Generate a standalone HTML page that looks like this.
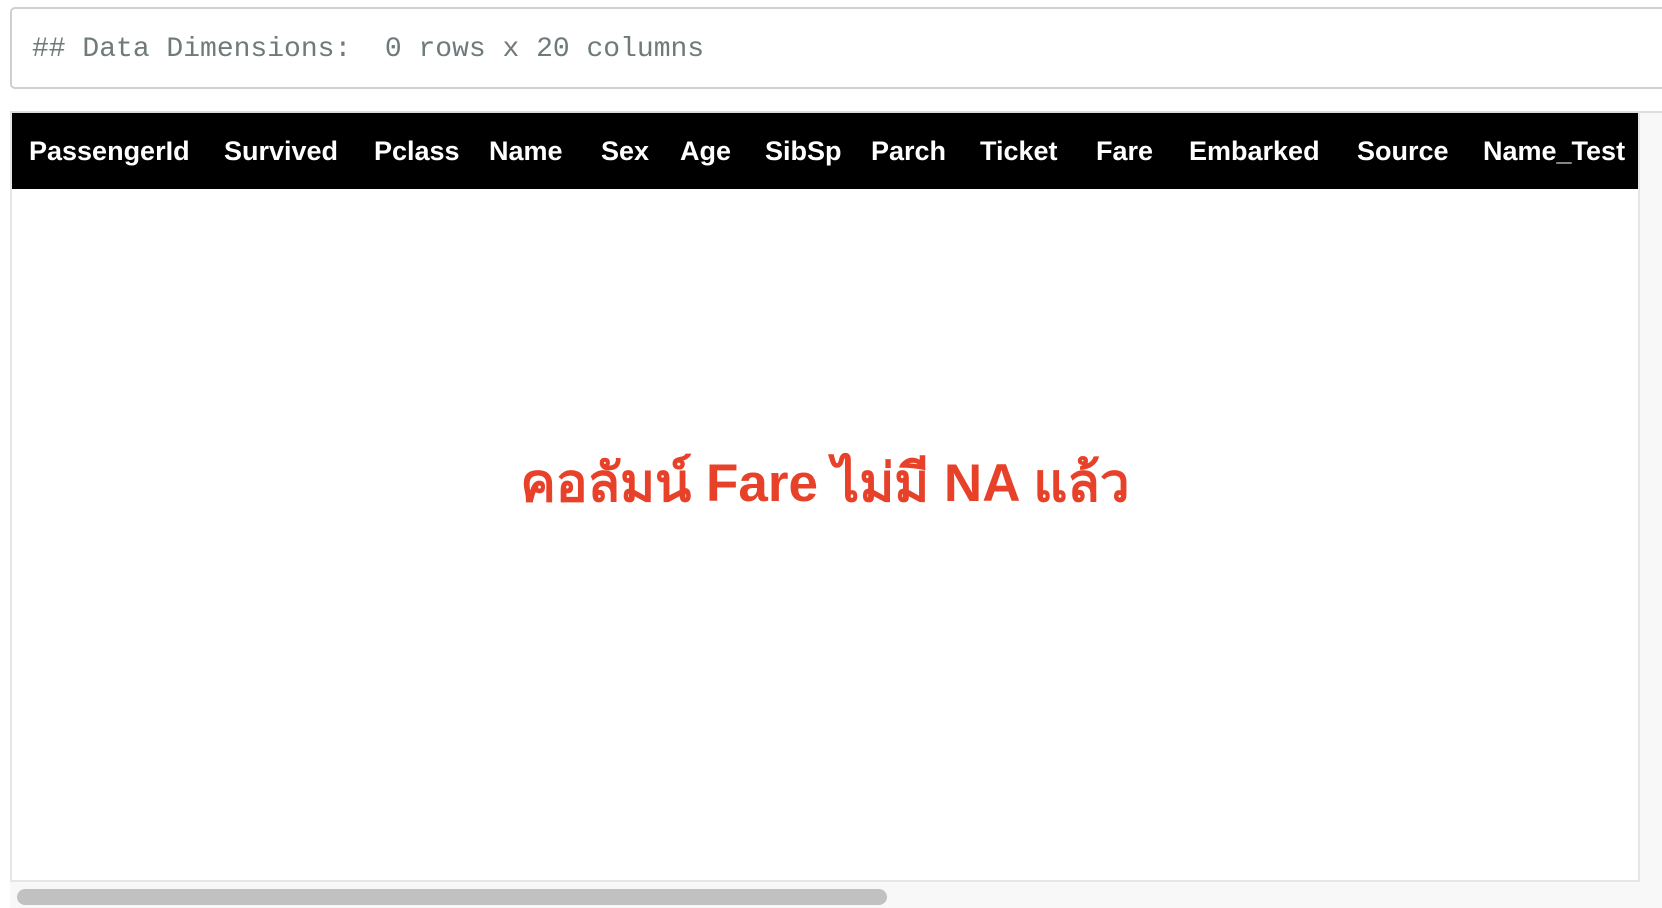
<!DOCTYPE html>
<html><head><meta charset="utf-8"><style>
html,body{margin:0;padding:0;width:1662px;height:906px;overflow:hidden;background:#fff;}
.pre{position:absolute;left:10px;top:7px;width:1680px;height:82px;border:2px solid #cfcfcf;border-radius:5px;box-sizing:border-box;}
.pre span{position:absolute;left:20px;top:24px;font-family:"Liberation Mono",monospace;font-size:28px;color:#6f7a7a;white-space:pre;line-height:34px;}
.wrap{position:absolute;left:10px;top:111px;width:1680px;height:795px;background:#f8f8f8;border-top:2px solid #ddd;}
.tbl{position:absolute;left:0;top:0;width:1626px;height:767px;background:#fff;border-left:2px solid #e6e6e6;border-right:2px solid #e6e6e6;border-bottom:2px solid #e6e6e6;}
.hdr{position:absolute;left:0;top:0;width:1626px;height:76px;background:#000;}
.hdr span{position:absolute;top:21px;color:#fff;font-family:"Liberation Sans",sans-serif;font-weight:bold;font-size:27px;line-height:34px;}
.msg{position:absolute;left:0;width:1626px;top:336px;text-align:center;color:#e8412a;font-family:"Liberation Sans",sans-serif;font-weight:bold;font-size:53px;line-height:70px;}
.thumb{position:absolute;left:7px;top:776px;width:870px;height:16px;border-radius:8px;background:#c1c1c1;}
</style></head><body>
<div class="pre"><span>## Data Dimensions:  0 rows x 20 columns</span></div>
<div class="wrap">
<div class="tbl">
<div class="hdr">
<span style="left:17px">PassengerId</span>
<span style="left:212px">Survived</span>
<span style="left:362px">Pclass</span>
<span style="left:477px">Name</span>
<span style="left:589px">Sex</span>
<span style="left:668px">Age</span>
<span style="left:753px">SibSp</span>
<span style="left:859px">Parch</span>
<span style="left:968px">Ticket</span>
<span style="left:1084px">Fare</span>
<span style="left:1177px">Embarked</span>
<span style="left:1345px">Source</span>
<span style="left:1471px">Name_Test</span>
</div>
<div class="msg">คอลัมน์ Fare ไม่มี NA แล้ว</div>
</div>
<div class="thumb"></div>
</div>
</body></html>
